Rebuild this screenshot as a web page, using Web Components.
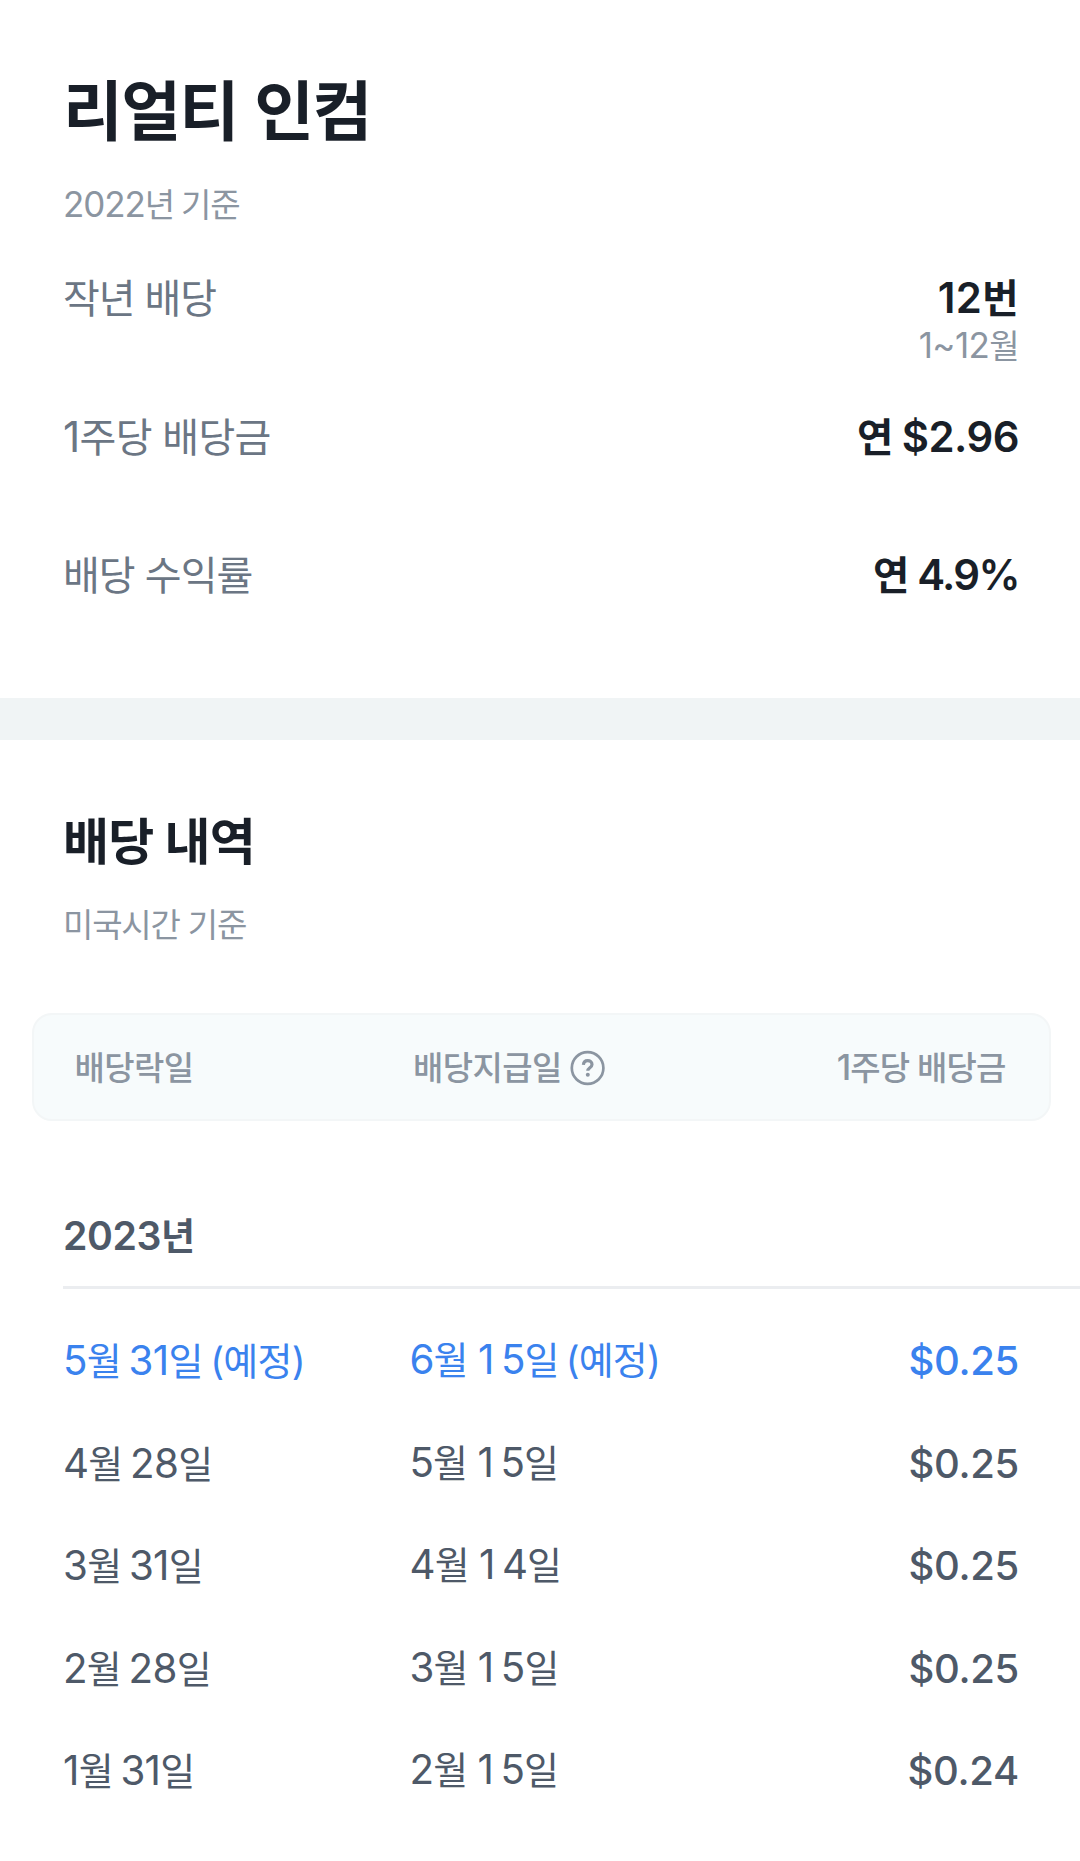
<!DOCTYPE html>
<html lang="ko">
<head>
<meta charset="utf-8">
<title>리얼티 인컴</title>
<style>
    body {
        margin: 0;
        background-color: #fff;
        color: #191f28;
        font-family: Inter, "Noto Sans CJK KR", sans-serif;
    }
</style>
</head>
<body>
<dividend-page></dividend-page>

<script>
// Text whose numerals are set slightly larger than the hangul around them.
// With the "tabular" attribute the digit 1 takes as much room as the others.
class MixedText extends HTMLElement {
    connectedCallback() {
        const root = this.attachShadow({mode: "open"});
        const pattern = this.hasAttribute("tabular") ? /(1)|([\d$.%~]+?(?=1|[^\d$.%~]|$))/g : /(\0)|([\d$.%~]+)/g;
        root.innerHTML = `
<style>
    :host {
        display: block;
        white-space: nowrap;
    }

    .num, .one {
        font-size: 1.06em;
        line-height: 0;
    }

    .one {
        padding: 0 7.5px 0 3px;
    }
</style>
<span>${this.getAttribute("text").replace(pattern, (m, one) => `<span class="${one ? "one" : "num"}">${m}</span>`)}</span>`;
    }
}

const pageTemplate = document.createElement("template");
pageTemplate.innerHTML = `
<style>
    :host {
        display: block;
        width: 1080px;
        height: 1861px;
        overflow: hidden;
    }

    hr {
        height: 41.5px;
        margin: 0;
        border: none;
        background-color: #f0f4f5;
    }
</style>
<stock-summary>
    <span slot="title">리얼티 인컴</span>
    <mixed-text slot="basis" text="2022년 기준"></mixed-text>
    <summary-row label="작년 배당" value="12번" note="1~12월" style="--label-tracking: -1.1px; --value-tracking: 0.4px"></summary-row>
    <summary-row label="1주당 배당금" value="연 $2.96" style="--value-tracking: -0.5px; --value-space: -0.5px"></summary-row>
    <summary-row label="배당 수익률" value="연 4.9%" style="--value-tracking: -1.6px; --value-space: 1px; --label-tracking: -1px"></summary-row>
</stock-summary>
<hr>
<dividend-history>
    <span slot="title">배당 내역</span>
    <span slot="basis">미국시간 기준</span>
    <mixed-text slot="year" text="2023년"></mixed-text>
    <dividend-row ex="5월 31일 (예정)" pay="6월 15일 (예정)" amount="$0.25" upcoming></dividend-row>
    <dividend-row ex="4월 28일" pay="5월 15일" amount="$0.25"></dividend-row>
    <dividend-row ex="3월 31일" pay="4월 14일" amount="$0.25"></dividend-row>
    <dividend-row ex="2월 28일" pay="3월 15일" amount="$0.25"></dividend-row>
    <dividend-row ex="1월 31일" pay="2월 15일" amount="$0.24"></dividend-row>
</dividend-history>`;

class DividendPage extends HTMLElement {
    connectedCallback() {
        this.attachShadow({mode: "open"}).appendChild(pageTemplate.content.cloneNode(true));
    }
}

class StockSummary extends HTMLElement {
    connectedCallback() {
        this.attachShadow({mode: "open"}).innerHTML = `
<style>
    :host {
        display: block;
        box-sizing: border-box;
        height: 698px;
        padding: 72px 61px 0 63px;
    }

    h1 {
        margin: 0;
        font-size: 65px;
        font-weight: 700;
        line-height: 80px;
        letter-spacing: -1.5px;
        word-spacing: 2.5px;
    }

    .basis {
        margin: 31px 0 48px;
        color: #8b95a1;
        font-size: 33px;
        line-height: 44px;
        letter-spacing: -1.1px;
        word-spacing: -1px;
    }
</style>
<h1><slot name="title"></slot></h1>
<div class="basis"><slot name="basis"></slot></div>
<slot></slot>`;
    }
}

class SummaryRow extends HTMLElement {
    connectedCallback() {
        const note = this.getAttribute("note");
        this.attachShadow({mode: "open"}).innerHTML = `
<style>
    :host {
        display: flex;
        justify-content: space-between;
        height: 138.5px;
        line-height: 48px;
    }

    .label {
        color: #6b7684;
        font-size: 40px;
        letter-spacing: var(--label-tracking, -0.7px);
    }

    .side {
        display: flex;
        flex-direction: column;
        align-items: flex-end;
        gap: 1px;
    }

    .value {
        font-size: 39.5px;
        font-weight: 600;
        letter-spacing: var(--value-tracking, 0);
        word-spacing: var(--value-space, 0);
    }

    .note {
        color: #8b95a1;
        font-size: 33px;
        line-height: 44px;
        letter-spacing: -0.6px;
    }
</style>
<mixed-text class="label" text="${this.getAttribute("label")}"></mixed-text>
<div class="side">
    <mixed-text class="value" text="${this.getAttribute("value")}"></mixed-text>
    ${note ? `<mixed-text class="note" text="${note}"></mixed-text>` : ""}
</div>`;
    }
}

class HelpIcon extends HTMLElement {
    connectedCallback() {
        this.attachShadow({mode: "open"}).innerHTML = `
<style>
    :host {
        display: block;
        width: 36px;
        height: 36px;
    }

    svg {
        display: block;
    }
</style>
<svg width="36" height="36" viewBox="0 0 36 36" fill="none" stroke="currentColor">
    <circle cx="17.6" cy="18" r="15.8" stroke-width="2.7"/>
    <path d="M13.4 14.8c.2-2.7 1.9-4.1 4.3-4.1 2.5 0 4.3 1.5 4.3 3.8 0 3.2-4.2 3.2-4.2 6.3" stroke-width="3.2"/>
    <circle cx="17.8" cy="24.8" r="2" fill="currentColor" stroke="none"/>
</svg>`;
    }
}

class DividendHistory extends HTMLElement {
    connectedCallback() {
        this.attachShadow({mode: "open"}).innerHTML = `
<style>
    :host {
        display: block;
        padding-top: 72px;
    }

    h2 {
        margin: 0 63px;
        font-size: 50px;
        font-weight: 700;
        line-height: 60px;
        letter-spacing: -0.8px;
    }

    .basis {
        margin: 31.5px 63px 0;
        color: #8b95a1;
        font-size: 33px;
        line-height: 44px;
        letter-spacing: -1.2px;
    }

    .head {
        display: grid;
        grid-template-columns: 338.5px 1fr auto;
        align-items: center;
        box-sizing: border-box;
        height: 108px;
        margin: 66px 29.5px 0 32px;
        padding: 2px 43px 0 40.5px;
        border: 2px solid #f3f6f7;
        border-radius: 20px;
        background-color: #f7fbfc;
        color: #8b95a1;
        font-size: 33px;
        font-weight: 500;
        line-height: 44px;
        letter-spacing: -0.6px;
    }

    .pay {
        display: flex;
        align-items: center;
        gap: 8.5px;
    }

    .amount {
        letter-spacing: -0.9px;
    }

    .year {
        margin: 91px 0 0 63px;
        padding-bottom: 24px;
        border-bottom: 3px solid #ebedf0;
        color: #4e5968;
        font-size: 37px;
        font-weight: 600;
        line-height: 50px;
        letter-spacing: -0.4px;
    }

    .rows {
        padding: 21px 61px 0 63px;
    }
</style>
<h2><slot name="title"></slot></h2>
<div class="basis"><slot name="basis"></slot></div>
<div class="head">
    <span>배당락일</span>
    <span class="pay">배당지급일<help-icon></help-icon></span>
    <mixed-text class="amount" text="1주당 배당금"></mixed-text>
</div>
<div class="year"><slot name="year"></slot></div>
<div class="rows"><slot></slot></div>`;
    }
}

class DividendRow extends HTMLElement {
    connectedCallback() {
        this.attachShadow({mode: "open"}).innerHTML = `
<style>
    :host {
        display: grid;
        grid-template-columns: 346.5px 1fr auto;
        height: 102.6px;
        color: #4e5968;
        font-size: 38px;
        line-height: 102.6px;
        letter-spacing: -0.7px;
        word-spacing: -2.5px;
    }

    :host([upcoming]) {
        color: #3a82ee;
    }

    .pay {
        line-height: 100px;
        letter-spacing: -0.9px;
    }

    .amount {
        font-size: 40px;
        font-weight: 500;
        line-height: 101px;
        letter-spacing: -0.3px;
    }
</style>
<mixed-text text="${this.getAttribute("ex")}"></mixed-text>
<mixed-text class="pay" tabular text="${this.getAttribute("pay")}"></mixed-text>
<span class="amount">${this.getAttribute("amount")}</span>`;
    }
}

window.customElements.define("mixed-text", MixedText);
window.customElements.define("help-icon", HelpIcon);
window.customElements.define("summary-row", SummaryRow);
window.customElements.define("stock-summary", StockSummary);
window.customElements.define("dividend-row", DividendRow);
window.customElements.define("dividend-history", DividendHistory);
window.customElements.define("dividend-page", DividendPage);
</script>
</body>
</html>
